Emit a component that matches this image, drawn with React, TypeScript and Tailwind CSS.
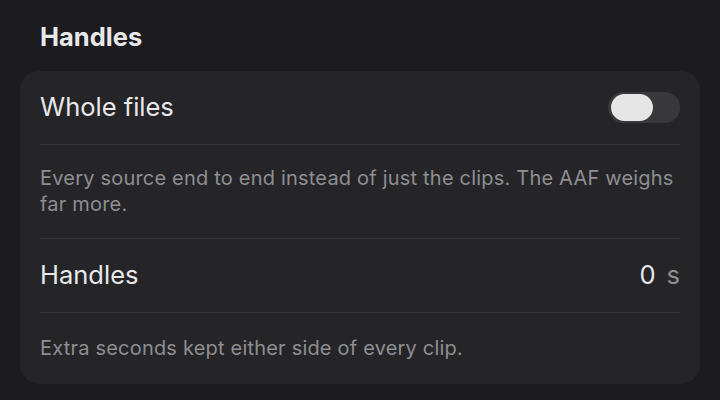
import { useState } from "react";

const font = { fontFamily: "Inter, 'Noto Sans', sans-serif" };

const Toggle = ({ on, onChange }: { on: boolean; onChange: () => void }) => (
  <button
    type="button"
    onClick={onChange}
    className={`flex h-[31px] w-[72px] items-center rounded-full px-[3px] ${
      on ? "justify-end bg-[#34c759]" : "justify-start bg-[#39393c]"
    }`}
  >
    <span className="h-[27px] w-[42px] rounded-full bg-[#e6e6e6]" />
  </button>
);

export default function App() {
  const [whole, setWhole] = useState(false);

  return (
    <main
      className="min-h-[400px] w-[720px] bg-[#1c1c1e] px-5 pt-[21px] antialiased"
      style={font}
    >
      <h2 className="px-5 text-[25.5px] font-bold leading-[31px] text-[#e8e8ea]">
        Handles
      </h2>
      <section className="mt-[19px] rounded-[20px] bg-[#252527] px-5">
        <div className="flex h-[74px] items-center justify-between border-b border-[#38383a]">
          <span className="text-[25.5px] text-[#e8e8ea]">Whole files</span>
          <Toggle on={whole} onChange={() => setWhole((v) => !v)} />
        </div>
        <p className="border-b border-[#38383a] pb-[21px] pt-[20px] text-[20px] leading-[26px] tracking-[0.2px] text-[#8e8e93]">
          Every source end to end instead of just the clips. The AAF weighs far
          more.
        </p>
        <div className="flex h-[74px] items-center justify-between border-b border-[#38383a]">
          <span className="text-[25.5px] text-[#e8e8ea]">Handles</span>
          <span className="text-[25.5px] text-[#e8e8ea]">
            0<span className="ml-[11px] text-[#8e8e93]">s</span>
          </span>
        </div>
        <p className="pb-[23px] pt-[22px] text-[20px] leading-[26px] tracking-[0.2px] text-[#8e8e93]">
          Extra seconds kept either side of every clip.
        </p>
      </section>
    </main>
  );
}
